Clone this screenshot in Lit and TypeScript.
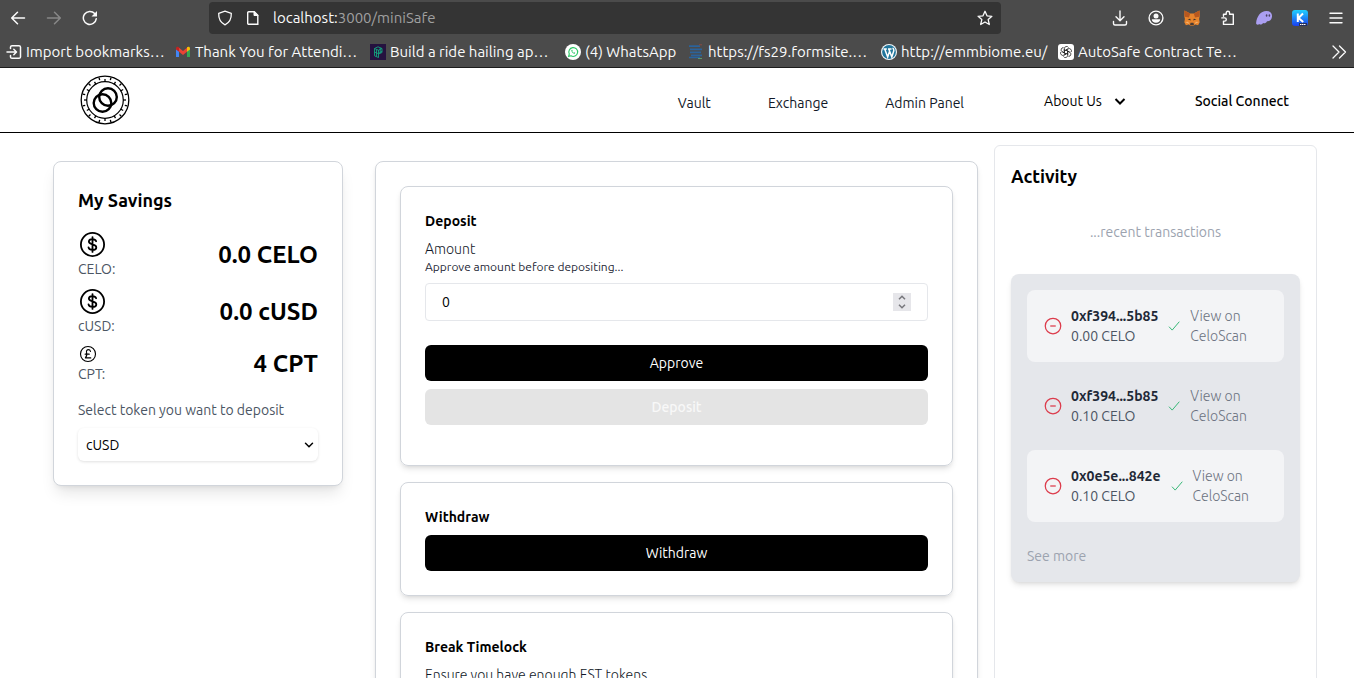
import { LitElement, html, css, svg } from "lit";
import { customElement, property } from "lit/decorators.js";
import { classMap } from "lit/directives/class-map.js";

const FONT = css`"Ubuntu", "Noto Sans", sans-serif`;

const base = css`
  *, *::before, *::after { box-sizing: border-box; }
  h2, h3, p, ul { margin: 0; padding: 0; }
  ul { list-style: none; }
  a { color: inherit; text-decoration: none; }
  button, input, select { font: inherit; margin: 0; }
  button { border: 0; padding: 0; background: none; color: inherit; cursor: pointer; }
  svg { display: block; flex: none; }
`;

const glyphs = {
  back: svg`<path d="M14.5 8H2M7.5 2.2 1.7 8l5.800 5.800" fill="none" stroke="currentColor" stroke-width="1.500" stroke-linecap="round" stroke-linejoin="round"/>`,
  forward: svg`<path d="M1.500 8H14M8.500 2.200 14.300 8l-5.800 5.800" fill="none" stroke="currentColor" stroke-width="1.500" stroke-linecap="round" stroke-linejoin="round"/>`,
  reload: svg`<path d="M14.300 8.700A6.500 6.500 0 1 1 12.700 3.600" fill="none" stroke="currentColor" stroke-width="1.500" stroke-linecap="round"/><path d="M15 1v5.500H9.500z" fill="currentColor"/>`,
  shield: svg`<path d="M8 1.200 14.300 3.400c.2 4.800-1.300 9-6.300 11.400C3 12.400 1.500 8.200 1.700 3.400z" fill="none" stroke="currentColor" stroke-width="1.300" stroke-linejoin="round"/>`,
  page: svg`<path d="M3.700 1.700h5.600l3.500 3.500v9.100H3.700a1 1 0 0 1-1-1V2.700a1 1 0 0 1 1-1z" fill="none" stroke="currentColor" stroke-width="1.400"/><path d="M9 1.500v4h4z" fill="currentColor" stroke="currentColor"/>`,
  star: svg`<path d="m8 1.300 2 4.500 4.900.5-3.700 3.300 1.100 4.900L8 12l-4.300 2.500 1.100-4.900L1.100 6.300 6 5.800z" fill="none" stroke="currentColor" stroke-width="1.300" stroke-linejoin="round"/>`,
  download: svg`<path d="M8 1v9.500M4 6.800l4 4 4-4M1.500 11.500v2a1.500 1.500 0 0 0 1.500 1.500h10a1.500 1.500 0 0 0 1.500-1.500v-2" fill="none" stroke="currentColor" stroke-width="1.400" stroke-linecap="round" stroke-linejoin="round"/>`,
  account: svg`<circle cx="8" cy="8" r="6.900" fill="none" stroke="currentColor" stroke-width="1.400"/><circle cx="8" cy="6" r="2.500" fill="currentColor"/><path d="M3.800 9.300h8.400c0 2-1.800 3.500-4.200 3.500s-4.200-1.500-4.200-3.500z" fill="currentColor"/>`,
  fox: svg`<path d="M.5.600 6.200 3.500h3.600L15.500.600l.2 5.600-.6 2.800.6 3.200-1.600 3-3-.8-1.500 1.400H6.400L4.900 14.400l-3 .8L.3 12.200.9 9 .3 6.200z" fill="#e8842c"/><path d="M.5.600 6.200 3.500 5 7.500.6 6.800zM15.500.600 9.800 3.500 11 7.500l4.400-.7z" fill="#b8581f"/><path d="m3.600 9.300 2.600-.5.600 1.700zM12.400 9.300l-2.600-.5-.6 1.700z" fill="#33302e"/><path d="M6.500 12.700h3l.5 2.500H6z" fill="#4a3c35"/><path d="m1 12 4.200 2-1-2.300zM15 12l-4.200 2 1-2.300z" fill="#f4b06c"/>`,
  puzzle: svg`<path d="M6.200 4.300V3a1.700 1.700 0 0 1 3.400 0v1.300H13.300v10.100H3.500v-3.300h1.200a1.600 1.600 0 0 0 0-3.200H1.800M6.200 4.300H3.500v2" fill="none" stroke="currentColor" stroke-width="1.400" stroke-linecap="round" stroke-linejoin="round"/>`,
  ghost: svg`<path d="M.1 13.300C.6 6.500 4.700 1 10.300 1c3.900 0 5.900 2.500 5.700 5.500-.3 3.800-3.200 5.200-5 4.800-.9 1.900-2.700 2.500-3.900 1.700-1.300 1.800-3 2-3.800 1C2.200 15.200.1 14.800.1 13.300z" fill="#ab9ff2"/><ellipse cx="10.600" cy="5.500" rx=".8" ry="1.200" fill="#4b4263"/><ellipse cx="13.400" cy="5.500" rx=".8" ry="1.200" fill="#4b4263"/>`,
  keplr: svg`<defs><linearGradient id="k" x1="0" y1="0" x2="0" y2="1"><stop stop-color="#1fd1ff"/><stop offset="1" stop-color="#1b3ff0"/></linearGradient></defs><rect width="16" height="16" rx="3" fill="url(#k)"/><path d="M5.800 3.500v8.500M11 3.500 6.500 8l4.700 4" fill="none" stroke="#fff" stroke-width="2"/><rect x="7" y="13" width="8" height="3" fill="#26305c"/><path d="M8 14.500h6" stroke="#fff" stroke-dasharray="1.500 .5"/>`,
  menu: svg`<path d="M2 3.200h12M2 8h12M2 12.800h12" stroke="currentColor" stroke-width="1.400" stroke-linecap="round"/>`,
  import: svg`<path d="M4.500 4.500V3A1.500 1.500 0 0 1 6 1.700h7A1.500 1.500 0 0 1 14.500 3v10a1.500 1.500 0 0 1-1.500 1.300H6A1.500 1.500 0 0 1 4.500 13v-1.500M1 8h9M7.800 5.300 10.500 8l-2.700 2.700" fill="none" stroke="currentColor" stroke-width="1.500" stroke-linecap="round" stroke-linejoin="round"/>`,
  gmail: svg`<path d="M1 4v9h3V6.300z" fill="#4285f4"/><path d="M15 4v9h-3V6.300z" fill="#34a853"/><path d="M4 3.800v4L8 11l4-3.200v-4L8 7z" fill="#ea4335"/><path d="M1 4.500C1 2.600 2.800 2.400 4 3.300v4.500L1 5.500z" fill="#c5221f"/><path d="M15 4.500c0-1.900-1.800-2.100-3-1.200v4.500l3-2.300z" fill="#fbbc04"/>`,
  ride: svg`<path d="M0 0h16v16H0z" fill="#25123f"/><path d="M4.500 4.500 8 2.800l4 1.700v4L8.500 10v3.500l-4-1.700zM4.500 4.500l4 1.700 3.500-1.700M8.500 6v4M6.500 5.300v7.300M4.500 8l4 1.700L12 7M10.200 3.800v5.300" fill="none" stroke="#14a37e" stroke-width=".9"/>`,
  whatsapp: svg`<circle cx="8" cy="8" r="8" fill="#fff"/><path d="m3.600 12.400.7-2.400A4.400 4.400 0 1 1 6 11.800z" fill="none" stroke="#2bc866" stroke-width="1.100"/><path d="M6.300 6c0 2.200 1.600 3.700 3.600 3.700l.3-1-1.100-.5-.5.500C7.900 8.400 7.500 8 7.300 7.400l.4-.5L7.200 5.800z" fill="#2bc866"/>`,
  lines: svg`<path d="M1 2.200h11M2 5.300h12M2 8.300h11M3 11.300h11M1 13.500h11" stroke="#2b639b" stroke-width="1.700"/><path d="M10 14.500h4" stroke="#5a9a6c"/><path d="M11 .8h3" stroke="#8a4a42"/>`,
  wordpress: svg`<circle cx="8" cy="8" r="8" fill="#f4f8fa"/><circle cx="8" cy="8" r="6.900" fill="#21759b"/><path d="M2.500 5h3.300M7 5h3.500M3.700 5l3 8L8.500 7.500M7.800 5l3 8 2-6.200c.3-1.300-.8-2-.8-3.100" fill="none" stroke="#fff" stroke-width="1.500"/>`,
  gpt: svg`<rect width="16" height="16" rx="3" fill="#fff"/><g fill="none" stroke="#222" stroke-width=".75">${[0, 60, 120, 180, 240, 300].map((a) => svg`<path transform="rotate(${a} 8 8)" d="M6.300 9V4.700a2.300 2.300 0 0 1 4.300-1.100M6.300 7 10 4.900"/>`)}</g>`,
  more: svg`<path d="m2 2 6 6-6 6M8.500 2l6 6-6 6" fill="none" stroke="currentColor" stroke-width="1.300" stroke-linecap="round" stroke-linejoin="round"/>`,
  chevron: svg`<path d="m3.500 6 4.500 4.500L12.500 6" fill="none" stroke="currentColor" stroke-width="2"/>`,
  caret: svg`<path d="m4.500 6.300 3.500 3.500 3.500-3.500" fill="none" stroke="currentColor" stroke-width="1.500" stroke-linecap="round"/>`,
  dollar: svg`<circle cx="8" cy="8" r="6.400" fill="none" stroke="currentColor" stroke-width="1"/><path d="M10 6.200C9.700 5.300 9 5 8 5c-1.200 0-2 .5-2 1.400C6 8.600 10.100 7.300 10.100 9.600 10.100 10.500 9.200 11 8 11s-2-.4-2.200-1.400M8 3.900v8.200" fill="none" stroke="currentColor" stroke-width="1" stroke-linecap="round"/>`,
  pound: svg`<circle cx="8" cy="8" r="6" fill="none" stroke="currentColor" stroke-width=".9"/><path d="M10 6c-.2-1-.9-1.500-1.700-1.500-1.100 0-1.700.9-1.500 2 .4 1.700.6 3.200-.9 4.600h4.300M5.700 8.100H9" fill="none" stroke="currentColor" stroke-width=".9" stroke-linecap="round" stroke-linejoin="round"/>`,
  minus: svg`<circle cx="8" cy="8" r="6.200" fill="none" stroke="#dc3b4b" stroke-width="1"/><path d="M5.800 8h4.400" stroke="#dc3b4b" stroke-width="1"/>`,
  check: svg`<path d="m3 8.700 3.200 3.400L13.300 3.700" fill="none" stroke="#37b877" stroke-width="1"/>`,
};
type Glyph = keyof typeof glyphs;
const icon = (name: Glyph, size = 16) =>
  html`<svg width=${size} height=${size} viewBox="0 0 16 16" aria-hidden="true">${glyphs[name]}</svg>`;

@customElement("browser-bar")
class BrowserBar extends LitElement {
  static styles = [base, css`
    :host { display: block; background: #4b4b4b; color: #fbfbfb; border-bottom: 1px solid #1c1c1c; font-family: ${FONT}; font-size: 15px; }
    .tools { display: grid; grid-template-columns: 193px minmax(0, 792px) 1fr; gap: 16px; height: 36px; padding: 2px 10px 2px 0; align-items: center; }
    .nav { display: flex; gap: 20px; padding-left: 10px; }
    .dim { color: #888; }
    .address { display: flex; align-items: center; gap: 12px; height: 32px; padding: 0 8px; border-radius: 4px; background: #343434; }
    .url { flex: 1; color: #a0a0a0; }
    .url b { font-weight: 400; color: #fbfbfb; }
    .extras { display: flex; justify-content: flex-end; gap: 20px; }
    .marks { display: grid; grid-template-columns: 169px 195px 195px 123px 193px 177px 1fr auto; height: 31px; padding: 0 7px 0 6px; align-items: center; }
    .mark { display: flex; align-items: center; gap: 4px; white-space: nowrap; }
  `];
  render() {
    const marks: [Glyph, string][] = [
      ["import", "Import bookmarks…"], ["gmail", "Thank You for Attendi…"], ["ride", "Build a ride hailing ap…"],
      ["whatsapp", "(4) WhatsApp"], ["lines", "https://fs29.formsite.…"], ["wordpress", "http://emmbiome.eu/"], ["gpt", "AutoSafe Contract Te…"],
    ];
    const extras: [Glyph, string][] = [
      ["download", "Downloads"], ["account", "Account"], ["fox", "Wallet"], ["puzzle", "Extensions"], ["ghost", "Phantom"], ["keplr", "Keplr"], ["menu", "Menu"],
    ];
    return html`
      <div class="tools">
        <div class="nav">
          <button aria-label="Back">${icon("back")}</button>
          <button class="dim" aria-label="Forward">${icon("forward")}</button>
          <button aria-label="Reload">${icon("reload")}</button>
        </div>
        <div class="address">${icon("shield")}${icon("page")}<span class="url"><b>localhost:</b>3000/miniSafe</span>
          <button aria-label="Bookmark this page">${icon("star")}</button></div>
        <div class="extras">${extras.map(([g, label]) => html`<button aria-label=${label}>${icon(g)}</button>`)}</div>
      </div>
      <div class="marks">
        ${marks.map(([g, text]) => html`<a class="mark" href="#">${icon(g)}${text}</a>`)}
        <button aria-label="More bookmarks">${icon("more")}</button>
      </div>`;
  }
}

@customElement("site-header")
class SiteHeader extends LitElement {
  static styles = [base, css`
    :host { display: flex; align-items: center; justify-content: space-between; height: 65px; padding: 0 65px 0 80px; border-bottom: 1px solid #000; font: 14px/20px ${FONT}; color: #111827; }
    .nav { display: flex; align-items: center; padding-top: 2px; }
    .pages { display: flex; gap: 57px; margin-right: 80px; padding-top: 4px; }
    .about { display: flex; align-items: center; gap: 10px; margin-right: 67px; color: #000; }
    .connect { font-weight: 500; color: #000; }
  `];
  render() {
    const ticks = Array.from({ length: 24 }, (_, i) => i * 15);
    return html`
      <a href="#" aria-label="Home"><svg width="50" height="50" viewBox="0 0 50 50" fill="none" stroke="#000">
        <circle cx="25" cy="25" r="23.800" stroke-width="1.300"/><circle cx="25" cy="25" r="18.300" stroke-width="1.200"/>
        ${ticks.map((a, i) => svg`<path transform="rotate(${a} 25 25)" d=${i % 2 ? "M25 2v2.500" : "M25 4v3"} stroke-width="1.300"/>`)}
        <circle cx="22.500" cy="28" r="8.800" stroke-width="2.400"/><circle cx="28" cy="22" r="8.800" stroke-width="2.400"/>
      </svg></a>
      <nav class="nav">
        <div class="pages"><a href="#">Vault</a><a href="#">Exchange</a><a href="#">Admin Panel</a></div>
        <button class="about">About Us ${icon("chevron")}</button>
        <button class="connect">Social Connect</button>
      </nav>`;
  }
}

@customElement("savings-card")
class SavingsCard extends LitElement {
  static styles = [base, css`
    :host { display: block; margin: 16px; padding: 24px; border: 1px solid #d1d5db; border-radius: 8px; background: #fff; box-shadow: 0 10px 15px -3px #0000001a, 0 4px 6px -4px #0000001a; }
    .title { font-size: 18px; line-height: 28px; font-weight: 600; margin-bottom: 16px; }
    .rows { display: grid; gap: 8px; }
    .row { display: flex; align-items: center; justify-content: space-between; }
    .name { color: #4b5563; }
    .value { font-size: 24px; line-height: 32px; font-weight: 700; }
    .label { display: block; margin: 16px 0 8px; color: #4b5563; }
    .pick { display: grid; align-items: center; }
    .pick > * { grid-area: 1 / 1; }
    .pick svg { justify-self: end; margin-right: 1px; pointer-events: none; }
    select { appearance: none; width: 100%; height: 33px; padding: 0 8px; border: 0; border-radius: 6px; background: #fff; color: #000; box-shadow: 0 1px 3px #0000001f; }
  `];
  render() {
    const rows: [Glyph, number, string, string][] = [
      ["dollar", 29, "CELO:", "0.0 CELO"], ["dollar", 29, "cUSD:", "0.0 cUSD"], ["pound", 20, "CPT:", "4 CPT"],
    ];
    return html`
      <h2 class="title">My Savings</h2>
      <div class="rows">${rows.map(([g, size, name, value]) => html`
        <div class="row"><div>${icon(g, size)}<p class="name">${name}</p></div><p class="value">${value}</p></div>`)}</div>
      <label class="label" for="token">Select token you want to deposit</label>
      <div class="pick">
        <select id="token"><option>cUSD</option><option>CELO</option></select>
        ${icon("caret")}
      </div>`;
  }
}

@customElement("vault-panel")
class VaultPanel extends LitElement {
  static styles = [base, css`
    :host { display: grid; gap: 16px; margin: 16px; padding: 24px; border: 1px solid #d1d5db; border-radius: 8px; background: #fff; box-shadow: 0 4px 6px -1px #0000001a, 0 2px 4px -2px #0000001a; }
    .card { padding: 24px; border: 1px solid #d1d5db; border-radius: 8px; box-shadow: 0 4px 6px -1px #0000001a, 0 2px 4px -2px #0000001a; }
    .title { font-size: 14px; line-height: 20px; font-weight: 700; margin-bottom: 8px; }
    .label { display: block; color: #111827; font-weight: 300; }
    .hint { font-size: 12px; line-height: 16px; color: #1f2937; margin-bottom: 8px; }
    .field { display: flex; align-items: center; height: 38px; padding: 0 16px; margin-bottom: 24px; border: 1px solid #e5e7eb; border-radius: 4px; }
    .field input { flex: 1; min-width: 0; border: 0; outline: 0; padding: 0; background: none; color: #000; appearance: textfield; }
    .field input::-webkit-inner-spin-button { display: none; }
    .spin { display: grid; width: 18px; height: 18px; background: #e6e6ea; color: #77777c; justify-items: center; align-items: center; }
    .action { display: block; width: 100%; height: 36px; border-radius: 6px; background: #000; color: #fff; }
    .action:disabled { margin: 8px 0 16px; background: #e4e4e4; color: #f8f8f8; font-weight: 500; }
    .text { color: #111827; font-weight: 300; }
  `];
  render() {
    return html`
      <section class="card">
        <h3 class="title">Deposit</h3>
        <label class="label" for="amount">Amount</label>
        <p class="hint">Approve amount before depositing...</p>
        <div class="field">
          <input id="amount" type="number" value="0">
          <div class="spin">
            <button aria-label="Increase"><svg width="8" height="5" viewBox="0 0 8 5" fill="none" stroke="currentColor" stroke-width="1.500"><path d="M1 4.300 4 1.300l3 3"/></svg></button>
            <button aria-label="Decrease"><svg width="8" height="5" viewBox="0 0 8 5" fill="none" stroke="currentColor" stroke-width="1.500"><path d="m1 .7 3 3 3-3"/></svg></button>
          </div>
        </div>
        <button class="action">Approve</button>
        <button class="action" disabled>Deposit</button>
      </section>
      <section class="card">
        <h3 class="title">Withdraw</h3>
        <button class="action">Withdraw</button>
      </section>
      <section class="card">
        <h3 class="title">Break Timelock</h3>
        <p class="text">Ensure you have enough EST tokens</p>
      </section>`;
  }
}

@customElement("activity-row")
class ActivityRow extends LitElement {
  @property() address = "";
  @property() amount = "";
  @property({ type: Boolean }) shaded = false;
  static styles = [base, css`
    :host { display: block; }
    .row { display: flex; align-items: center; padding: 16px; border-radius: 8px; }
    .shaded { background: #f3f4f6; }
    .who { margin: 0 8px; }
    .address { font-weight: 700; color: #1f2937; }
    .amount { color: #4b5563; }
    .link { margin-left: 8px; font-weight: 300; color: #6b7280; }
  `];
  render() {
    return html`<div class=${classMap({ row: true, shaded: this.shaded })}>
      ${icon("minus", 20)}
      <div class="who"><p class="address">${this.address}</p><p class="amount">${this.amount}</p></div>
      ${icon("check")}
      <a class="link" href="#">View on<br>CeloScan</a>
    </div>`;
  }
}

@customElement("activity-panel")
class ActivityPanel extends LitElement {
  static styles = [base, css`
    :host { display: block; padding: 16px; border: 1px solid #e5e7eb; border-radius: 6px; }
    .title { font-size: 18px; line-height: 28px; font-weight: 700; }
    .note { margin: 32px 0; text-align: center; color: #9ca3af; }
    .box { padding: 16px; border-radius: 8px; background: #e5e7eb; box-shadow: 0 4px 6px -1px #0000001a, 0 2px 4px -2px #0000001a; }
    .list { display: grid; gap: 8px; margin-bottom: 24px; }
    .more { display: block; color: #9ca3af; }
  `];
  render() {
    const items = [
      { address: "0xf394...5b85", amount: "0.00 CELO" },
      { address: "0xf394...5b85", amount: "0.10 CELO" },
      { address: "0x0e5e...842e", amount: "0.10 CELO" },
    ];
    return html`
      <h2 class="title">Activity</h2>
      <p class="note">...recent transactions</p>
      <div class="box">
        <ul class="list">${items.map((it, i) => html`
          <li><activity-row .address=${it.address} .amount=${it.amount} .shaded=${i % 2 === 0}></activity-row></li>`)}</ul>
        <a class="more" href="#">See more</a>
      </div>`;
  }
}

@customElement("app-root")
class AppRoot extends LitElement {
  static styles = [base, css`
    :host { display: block; height: 100vh; overflow: hidden; background: #fff; color: #000; font: 14px/20px ${FONT}; }
    .content { display: grid; grid-template-columns: 322fr 635fr 323fr; max-width: 1280px; margin: 0 auto; padding-top: 12px; }
    .start { align-self: start; }
  `];
  render() {
    return html`
      <browser-bar></browser-bar>
      <site-header></site-header>
      <main class="content">
        <savings-card class="start"></savings-card>
        <vault-panel class="start"></vault-panel>
        <activity-panel></activity-panel>
      </main>`;
  }
}
